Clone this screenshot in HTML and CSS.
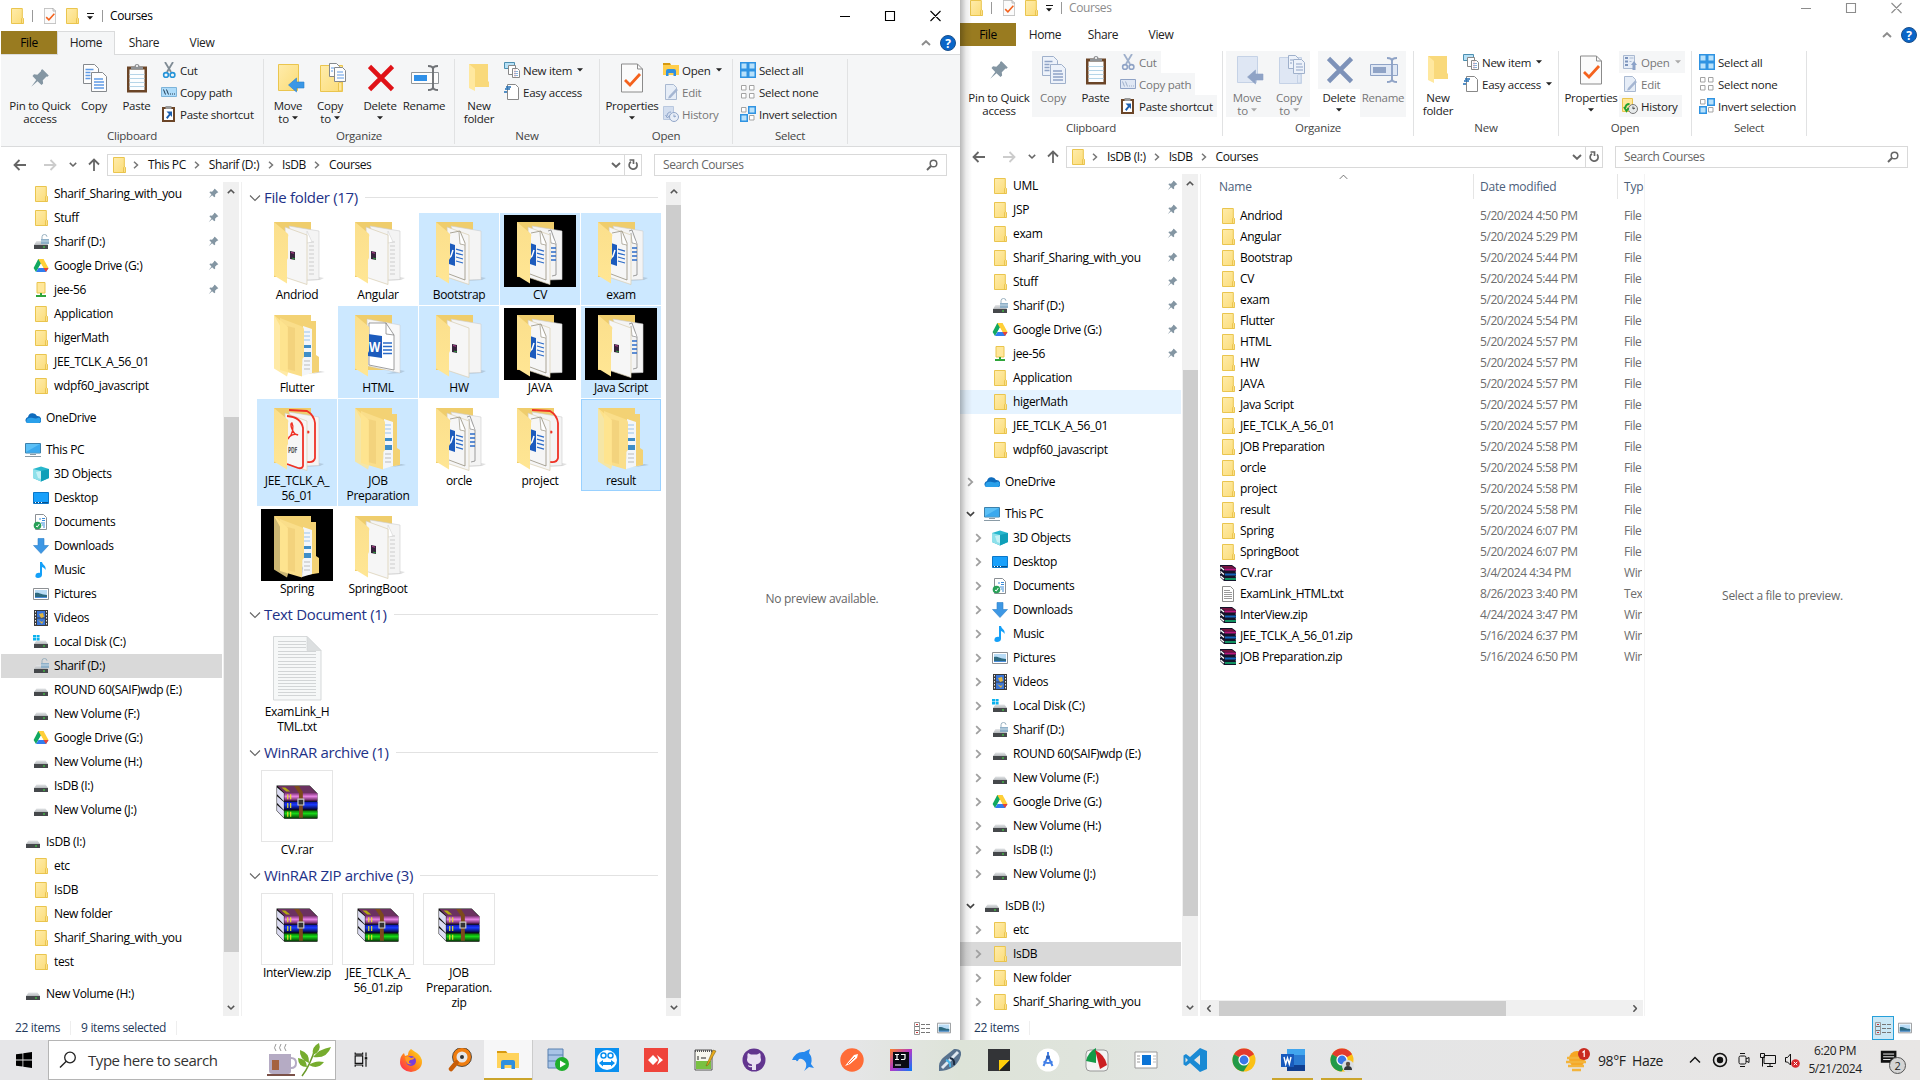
FILE: index.html
```html
<!DOCTYPE html>
<html lang="en">
<head>
<meta charset="utf-8">
<title>Courses</title>
<link rel="stylesheet" href="styles.css">
</head>
<body>
<svg class="defs" aria-hidden="true">
<defs>
<linearGradient id="gf" x1="0" y1="0" x2="1" y2="1"><stop offset="0" stop-color="#ffecab"/><stop offset="1" stop-color="#fbdc78"/></linearGradient>
<linearGradient id="gflap" x1="0" y1="0" x2="0" y2="1"><stop offset="0" stop-color="#fbdf8c"/><stop offset="1" stop-color="#ffe694"/></linearGradient>
<linearGradient id="gdrv" x1="0" y1="0" x2="0" y2="1"><stop offset="0" stop-color="#e4e6e8"/><stop offset="1" stop-color="#b4b8bb"/></linearGradient>
<linearGradient id="gpur" x1="0" y1="0" x2="0" y2="1"><stop offset="0" stop-color="#7a2c72"/><stop offset=".45" stop-color="#e884e4"/><stop offset="1" stop-color="#5c1d55"/></linearGradient>
<linearGradient id="gblu" x1="0" y1="0" x2="0" y2="1"><stop offset="0" stop-color="#1010a8"/><stop offset=".4" stop-color="#1a3cff"/><stop offset="1" stop-color="#04043c"/></linearGradient>
<linearGradient id="ggrn" x1="0" y1="0" x2="0" y2="1"><stop offset="0" stop-color="#067006"/><stop offset=".4" stop-color="#18d818"/><stop offset="1" stop-color="#053c05"/></linearGradient>
<linearGradient id="gff" x1="1" y1="0" x2="0" y2="1"><stop offset="0" stop-color="#ffe226"/><stop offset=".5" stop-color="#ff8a16"/><stop offset="1" stop-color="#ff1a5e"/></linearGradient>
<linearGradient id="gij" x1="0" y1="0" x2="1" y2="1"><stop offset="0" stop-color="#fd8224"/><stop offset=".5" stop-color="#b238c8"/><stop offset="1" stop-color="#087cfa"/></linearGradient>
</defs>
<symbol id="folder" viewBox="0 0 16 16"><path d="M2.500.5h10.800v9.200l1 .8v5H2.500z" fill="var(--f1,url(#gf))" stroke="var(--f2,#eac54e)"/><path d="M12.500 15.500V10.500l.8-.8 1 .8v5z" fill="var(--f1,#ffe79a)" stroke="var(--f2,#e6be40)" stroke-width=".8"/></symbol>
<symbol id="netfolder" viewBox="0 0 16 16"><path d="M4 .5h8v10.500H4z" fill="#ffe79a" stroke="#eac54e"/><path d="M3 14h10M8 11v4" stroke="#2fa53a" stroke-width="2"/></symbol>
<symbol id="drive" viewBox="0 0 16 16"><path d="M3.500 6.500h9L15 10H1z" fill="url(#gdrv)"/><path d="M1 10h14v4H1z" fill="#45484b"/><path d="M10 11.500h2v1h-2z" fill="#3fe83f"/></symbol>
<symbol id="drivelock" viewBox="0 0 16 16"><path d="M3.500 7h9L15 11H1z" fill="url(#gdrv)"/><path d="M1 11h14v4H1z" fill="#45484b"/><path d="M10 12.500h2v1h-2z" fill="#3fe83f"/><path d="M9 5V2.800a2.500 2.300 0 0 1 5 0" fill="none" stroke="#9ab1bf"/><path d="M8 5h8v5H8z" fill="#8fb0c8"/><path d="M8 7h8" stroke="#c7dbe8"/></symbol>
<symbol id="drivec" viewBox="0 0 16 16"><use href="#drive"/><path d="M0 1h3v2.500H0zM3.600 1h3v2.500h-3zM0 4.100h3v2.500H0zM3.600 4.100h3v2.500h-3z" fill="#0ab2ee"/></symbol>
<symbol id="gdrive" viewBox="0 0 16 16"><path d="M5.300 1h5.200L5.500 9.800 3 14 .6 10z" fill="#11a861"/><path d="M5.300 1h5.200l5 9h-5.300z" fill="#ffcf38"/><path d="M3 14l2.500-4h10L13 14z" fill="#2f7df0"/><path d="M10.500 10h5L13 14z" fill="#ea4335"/><path d="M8 5.800L10.500 10h-5z" fill="#fff"/></symbol>
<symbol id="onedrive" viewBox="0 0 16 16"><path d="M3 7a4.800 4.800 0 0 1 9-1 4 4 0 0 1 3 7H2A3.300 3.300 0 0 1 3 7z" fill="#0f6cbd"/><path d="M2 13a3 3 0 0 1 2-5c4-1 5 2 10-.5A3 3 0 0 1 14 13z" fill="#2aa0ea"/></symbol>
<symbol id="pc" viewBox="0 0 16 16"><path d="M.5 1.500h15v9.500H.5z" fill="#5cc0f6" stroke="#3c81ac"/><path d="M1 10L15 2v8.500H1z" fill="#3ba9ee"/><path d="M5 12.500h6M0 14.500h16" stroke="#8a9ba6"/></symbol>
<symbol id="cube" viewBox="0 0 16 16"><path d="M0 3l8-2.500L16 3v9l-8 3.500L0 12z" fill="#28b7cc"/><path d="M0 3l8 2v10.500L0 12z" fill="#8de0ea"/><path d="M3 6l5-1v8l-3-1z" fill="#c5f1f5"/><path d="M8 5l8-2v9l-8 3.500z" fill="#0f9fb8"/></symbol>
<symbol id="desktop" viewBox="0 0 16 16"><path d="M.5 2.500h15v11H.5z" fill="#18a0fb" stroke="#0a77c9"/><path d="M1 12.500h14" stroke="#07508c"/><path d="M2 12.500h9" stroke="#fff" stroke-dasharray="1 2"/></symbol>
<symbol id="docs" viewBox="0 0 16 16"><path d="M2.500.5h8l3 3v12h-11z" fill="#fff" stroke="#8a8f94"/><path d="M6 5h2M9 4.500h3M9 6.500h3M8 9h4M9 11h3M10 13h2" stroke="#3a8bd8"/><circle cx="4.500" cy="11.500" r="3.800" fill="#28a058"/><path d="M3 12l1.300 1 2-3" fill="none" stroke="#fff"/></symbol>
<symbol id="down" viewBox="0 0 16 16"><path d="M5 .5h6v7h4.500L8 15.500.5 7.500H5z" fill="#3d97e4" stroke="#2c7fca" stroke-width=".6"/></symbol>
<symbol id="music" viewBox="0 0 16 16"><path d="M7 0h2c.5 3 4.500 3.500 3.500 8-1-2-2-2.500-3.500-3v8c0 2-2 3-4 3s-3-1-2.500-2.800S5 10.500 7 11z" fill="#14a0f8"/></symbol>
<symbol id="pics" viewBox="0 0 16 16"><path d="M.5 2.500h15v11H.5z" fill="#fff" stroke="#8d9094"/><path d="M2 4h12v8H2z" fill="#b9dcf6"/><path d="M2 7c4-1 6 2 12 2v3H2z" fill="#2e6a80"/><path d="M2 11h12v1H2z" fill="#4c8edb"/></symbol>
<symbol id="video" viewBox="0 0 16 16"><path d="M1 0h14v16H1z" fill="#3a3a3a"/><path d="M2.500 1v14M13.500 1v14" stroke="#eee" stroke-dasharray="1.500 1.500"/><path d="M4 1h8v6.500H4zM4 8.500h8V15H4z" fill="#3a76d8"/><path d="M6 4l4-1 1 4-3 1zM5 10l4 2 2-2-2 4z" fill="#e3b53a"/></symbol>
<symbol id="pin" viewBox="0 0 16 16"><path d="M10 1l5 5-1 1-.8-.2-3 3 .3 2.500-1.300 1.200L6 10.500 1 15l4-5.500-3-3.200L3.200 5l2.700.3 3-3L8.800 1.500z" fill="#8496a3"/></symbol>
<symbol id="rar" viewBox="0 0 16 16"><path d="M0 0h12l4 3v3l-.5 1 .5 1v3l-.5 1 .5.500V16H4L0 12V9l1-.5L0 7.500V4.500L1 4 0 3z" fill="#14142a"/><path d="M1 1h11l3 2.300H4.500z" fill="#74133f"/><path d="M4.500 3.500H16v2H4.500z" fill="#b8187c"/><path d="M5 8.500h11v2H5z" fill="#1563b8"/><path d="M5 13h11v2H5z" fill="#109060"/><path d="M.5 2l3.500 3M.5 6.500l3.500 3M.5 11l3.500 3" stroke="#fff" stroke-width="1.300"/></symbol>
<symbol id="txt" viewBox="0 0 16 16"><path d="M2.500.5h8l3 3v12h-11z" fill="#fff" stroke="#8c8c8c"/><path d="M4 4.500h6M4 6.500h8M4 8.500h8M4 10.500h8M4 12.500h8" stroke="#999"/></symbol>
<symbol id="check" viewBox="0 0 22 29"><path d="M.5.5h16l5 5v23H.5z" fill="#fbfbfb" stroke="#8b8b8b"/><path d="M16.500.5v5h5" fill="none" stroke="#8b8b8b"/><path d="M4 16.500l5 5 10-11" fill="none" stroke="#f4621d" stroke-width="2.800"/></symbol>
<symbol id="copy" viewBox="0 0 24 28"><g fill="var(--p,#fdfdfd)" stroke="var(--ps,#85898d)"><path d="M.5.5h11l4 4v15H.5z"/><path d="M8.500 8.500h11l4 4v15h-15z"/></g><path d="M2.500 5.500h8M2.500 8.500h5M2.500 11.500h5M2.500 14.500h5M11 15h9M11 18h10M11 21h10M11 24h10" stroke="var(--b,#5f9be6)" stroke-width="1.300"/></symbol>
<symbol id="paste" viewBox="0 0 20 29"><path d="M0 3h20v26H0z" fill="#6b4527"/><path d="M2.500 6h15v20.500h-15z" fill="#fcfeff"/><path d="M2.500 11h15M2.500 15h15M2.500 19h15M2.500 23h15" stroke="#b5d5e8"/><path d="M4 6V3h3.500a2.500 2.500 0 0 1 5 0H16v3z" fill="#8e9194"/><circle cx="10" cy="2.500" r="1" fill="#fff"/></symbol>
<symbol id="cut" viewBox="0 0 16 16"><path d="M4 0l6 10M12 0L6 10" stroke="var(--ps,#7f8b94)" stroke-width="1.800"/><circle cx="5" cy="13" r="2.400" fill="none" stroke="var(--b,#2493d8)" stroke-width="1.600"/><circle cx="11.500" cy="13" r="2.400" fill="none" stroke="var(--b,#2493d8)" stroke-width="1.600"/></symbol>
<symbol id="path" viewBox="0 0 16 16"><path d="M.5 3.500h15v9H.5z" fill="var(--f1,#aedcfa)" stroke="var(--b,#7db4da)"/><path d="M2.500 5.500l2 5M5.500 5.500l2 5M9 10h1M11 10h1M13 10h1" stroke="var(--ps,#1f3a52)"/></symbol>
<symbol id="shortcut" viewBox="0 0 16 16"><path d="M1 1h13v15H1z" fill="#6b4527"/><path d="M3 3h9v11H3z" fill="#fff"/><path d="M4.500 0h6v3h-6z" fill="#999"/><path d="M5.500 5.500H11V11L9.300 9.300 6.500 13 5 11.500 8 8z" fill="#1c5fae"/></symbol>
<symbol id="bigfolder" viewBox="0 0 26 30"><path d="M.5 1.500h20v22l-1 1v3H.5z" fill="var(--f1,url(#gf))" stroke="var(--f2,#eac54e)"/></symbol>
<symbol id="move" viewBox="0 0 27 30"><use href="#bigfolder" width="26" height="30"/><path d="M10.500 22l8-7v4H26v6h-7.500v4z" fill="var(--b,#3a97e6)" stroke="var(--b,#2a7fcc)" stroke-width=".6"/></symbol>
<symbol id="copyto" viewBox="0 0 27 30"><path d="M.5 2.500h22v26H.5z" fill="var(--f1,url(#gf))" stroke="var(--f2,#eac54e)"/><path d="M18.500 28V20l1.500-1 2 1v8z" fill="var(--f1,#ffe79a)" stroke="var(--f2,#eac54e)"/><g fill="var(--p,#fdfdfd)" stroke="var(--ps,#85898d)"><path d="M9.500.5h7l3 3v10h-10z"/><path d="M14.500 4.500h8l3 3v11h-11z"/></g><path d="M11 5h3M11 8h2M17 9h6M17 12h7M17 15h7" stroke="var(--b,#5f9be6)"/></symbol>
<symbol id="delete" viewBox="0 0 26 26"><path d="M1.500 1.500l23 23M24.500 1.500l-23 23" stroke="var(--b,#e01217)" stroke-width="4.600"/></symbol>
<symbol id="rename" viewBox="0 0 28 26"><path d="M.5 7.500h27v11H.5z" fill="var(--f1,#fdfdfd)" stroke="var(--b,#92979b)"/><path d="M3 10h13v6H3z" fill="var(--b,#2f90e8)"/><path d="M22 2v22M17 1c4 0 5 1 5 3 0-2 1-3 5-3M17 25c4 0 5-1 5-3 0 2 1 3 5 3" fill="none" stroke="var(--b,#6f7276)" stroke-width="1.900"/></symbol>
<symbol id="newfolder" viewBox="0 0 20 28"><path d="M0 0h19v17l1 1v5H4z" fill="#f9d97b"/><path d="M0 0l6 5v22l-6-3z" fill="#ffe89f"/></symbol>
<symbol id="newitem" viewBox="0 0 16 16"><path d="M.5.5h10v6H.5z" fill="#b7e1f7" stroke="#4d8fb0"/><path d="M4.500 3.500h7v9h-7z" fill="#fff" stroke="#888"/><path d="M8.500 6.500h5l2 2v7h-7z" fill="#fff" stroke="#888"/><path d="M10 9.500h4M10 11.500h4M10 13.500h4" stroke="#88b2dc"/><path d="M11 7v8" stroke="#e8a0a0" stroke-width=".6"/></symbol>
<symbol id="easy" viewBox="0 0 16 16"><path d="M3.500.5h8l3 3v12h-11z" fill="#fff" stroke="#888"/><path d="M0 8h3M1 5h5M2 3h5" stroke="#1f6eb5" stroke-width="1.500"/></symbol>
<symbol id="openx" viewBox="0 0 16 16"><path d="M0 1h7l1 2H0z" fill="#d79a10"/><path d="M0 3h16v10H0z" fill="#ffce4c"/><path d="M3 14V9q0-2 2-2h6q2 0 2 2v5h-2.500v-3h-5v3z" fill="#2f8fe0"/></symbol>
<symbol id="openoff" viewBox="0 0 16 16"><path d="M1.500 1.500h11v13h-11z" fill="#e6edf7" stroke="#a9b9d1"/><path d="M3 4h3M3 7.500h3M3 11h3" stroke="#7b93bb" stroke-width="2"/><path d="M7.500 4h4M7.500 7.500h2" stroke="#a9b9d1"/><path d="M9 11l3-4 3 4h-1.500v5h-3v-5z" fill="#8ba2c8"/></symbol>
<symbol id="edit" viewBox="0 0 16 16"><path d="M2.500.5h8l3 3v12h-11z" fill="#e6edf7" stroke="#a9b9d1"/><path d="M5 14.500L6 12 13 4.500l2 1.500-7.500 8z" fill="#a5b6d2"/></symbol>
<symbol id="historyoff" viewBox="0 0 16 16"><path d="M.5.5h10v13H.5z" fill="#d3deef" stroke="#b9c8df"/><circle cx="11" cy="11" r="4.500" fill="#e8eef7" stroke="#92a6c8"/><path d="M11 8.500V11l2-1M4 10c0-3 2-4 4-4M2.500 9l2 3 2-2.500" fill="none" stroke="#8ba2c8"/></symbol>
<symbol id="history" viewBox="0 0 16 16"><path d="M.5.5h10v13H.5z" fill="#ffe79a" stroke="#eac54e"/><circle cx="11" cy="11" r="4.500" fill="#e6e9ea" stroke="#777"/><path d="M11 8.500V11l2-1" fill="none" stroke="#444"/><path d="M3.500 10c0-3 2-4 4-4M2 9l2.500 4 2-3" fill="none" stroke="#20a030" stroke-width="1.800"/></symbol>
<symbol id="selall" viewBox="0 0 16 16"><path d="M.75.75h6.500v6.500H.75zM8.750.75h6.500v6.500h-6.500zM.75 8.750h6.500v6.500H.75zM8.750 8.750h6.500v6.500h-6.500z" fill="#b8e1fb" stroke="#2f93e2" stroke-width="1.500"/></symbol>
<symbol id="selnone" viewBox="0 0 16 16"><path d="M1.500 1.500h4.500v4.500H1.500zM9.500 1.500H14v4.500H9.500zM1.500 9.500h4.500V14H1.500zM9.500 9.500H14V14H9.500z" fill="#fff" stroke="#a3a3a3"/></symbol>
<symbol id="selinv" viewBox="0 0 16 16"><path d="M1.500 1.500h4.500v4.500H1.500zM9.500 9.500H14V14H9.500z" fill="#fff" stroke="#a3a3a3"/><path d="M8.750.75h6.500v6.500h-6.500zM.75 8.750h6.500v6.500H.75z" fill="#b8e1fb" stroke="#2f93e2" stroke-width="1.500"/></symbol>
<symbol id="tri" viewBox="0 0 6 4"><path d="M0 .3h6L3 3.500z" fill="currentColor"/></symbol>
<symbol id="right" viewBox="0 0 6 8"><path d="M1 .7L4.500 4 1 7.300" fill="none" stroke="currentColor" stroke-width="1.500"/></symbol>
<symbol id="dn" viewBox="0 0 10 6"><path d="M1 1l4 3.800L9 1" fill="none" stroke="currentColor" stroke-width="1.900"/></symbol>
<symbol id="up" viewBox="0 0 10 6"><path d="M1 5l4-3.800L9 5" fill="none" stroke="currentColor" stroke-width="1.900"/></symbol>
<symbol id="thin" viewBox="0 0 12 8"><path d="M1 1.500l5 5 5-5" fill="none" stroke="currentColor" stroke-width="1.100"/></symbol>
<symbol id="arrow" viewBox="0 0 14 12"><path d="M6.500 1L1.500 6l5 5M1.500 6H13" fill="none" stroke="currentColor" stroke-width="1.800"/></symbol>
<symbol id="refresh" viewBox="0 0 12 12"><path d="M4 2.800a4 4 0 1 0 5 .6M2.500 1h4v4" fill="none" stroke="currentColor" stroke-width="1.700"/></symbol>
<symbol id="lens" viewBox="0 0 12 12"><circle cx="7.500" cy="4.500" r="3.300" fill="none" stroke="currentColor" stroke-width="1.500"/><path d="M5 7L1 11" stroke="currentColor" stroke-width="1.900"/></symbol>
<symbol id="details" viewBox="0 0 17 13"><path d="M.5.5h5v12h-5z" fill="none" stroke="#999"/><path d="M1 4.500h4M1 8.500h4M7 2.500h4M12 2.500h4M7 6.500h4M12 6.500h4M7 10.500h4M12 10.500h4" stroke="#777"/><path d="M2 2h2v1H2zM2 10h2v1H2z" fill="#c33"/></symbol>
<symbol id="winlogo" viewBox="0 0 16 16"><path d="M0 2.300L6.500 1.400V7.600H0zM7.300 1.300L16 0v7.600H7.300zM0 8.400h6.500v6.200L0 13.700zM7.300 8.400H16V16l-8.700-1.300z" fill="#000"/></symbol>

<symbol id="t-back" viewBox="0 0 72 72"><path d="M44 66l15-1 4-2-5-1z" fill="#000" opacity=".12"/><path d="M13 7h37v55H13z" fill="#efcd6c"/></symbol>
<symbol id="t-flap" viewBox="0 0 72 72"><path d="M13 7l13 11q2 1 1 4v21l-1 2v23.500l-13-8z" fill="url(#gflap)"/></symbol>
<symbol id="t-p2" viewBox="0 0 72 72"><path d="M28 11l30 5v48.500l-15 .5z" fill="#f4f4f4" stroke="#ccc" stroke-width=".6"/></symbol>
<symbol id="t-p1" viewBox="0 0 72 72"><path d="M24 12l22 8v49.500l-21-7z" fill="#f6f6f6" stroke="#d8cdb0" stroke-width=".7"/></symbol>
<symbol id="t-rar" viewBox="0 0 72 72"><path d="M29 36l5 1v8l-5-1z" fill="#36233c"/><path d="M30 37.500l3 .7" stroke="#b33a8c"/><path d="M31 43l3 1" stroke="#2a9a3a"/></symbol>
<symbol id="t-lines" viewBox="0 0 72 72"><path d="M48 27h5M48 31h5M48 35h5M48 39h5M48 43h5M48 47h5M48 51h5M48 55h5M48 59h5" stroke="#ccc"/><path d="M46 16l5 11-5 1z" fill="#fff" stroke="#ccc" stroke-width=".5"/></symbol>
<symbol id="t-word1" viewBox="0 0 72 72"><path d="M27 18l10-2 5 12v37l-16-6" fill="none" stroke="#8a836f" stroke-width=".7"/><path d="M36 17l1 12 5 1" fill="#fff" stroke="#8a836f" stroke-width=".6"/><path d="M26 28l6 2v21l-6-2z" fill="#1c5bbd"/><path d="M26 43l2-2 2-6" fill="none" stroke="#fff" stroke-width="1.500"/><path d="M33 34l7 2M33 38l7 2M33 42l7 2M33 46l7 2" stroke="#2b6bc8" stroke-width="1.300"/></symbol>
<symbol id="t-word2" viewBox="0 0 72 72"><path d="M44 16l3-1 5 14v31l-4 1" fill="none" stroke="#777" stroke-width=".7"/><path d="M46 18l1 10 5 1" fill="#fff" stroke="#777" stroke-width=".6"/><path d="M47 33h5M47 37h5M47 41h5M47 45h5" stroke="#2b6bc8" stroke-width="1.300"/></symbol>
<symbol id="t-pdf2" viewBox="0 0 72 72"><path d="M28 9l18 1q7 4 8 12v35q-1 5-8 4" fill="none" stroke="#ef3226" stroke-width="1.800"/><circle cx="47" cy="31" r="1.500" fill="#ef3226"/></symbol>
<symbol id="t-pdf1" viewBox="0 0 72 72"><path d="M26 15q14 1 16 12v38q-1 3-5 2l-11-4" fill="none" stroke="#ef3226" stroke-width="1.800"/><path d="M27 38c5-5 6-12 4-16-3 0 1 12 6 12-4-2-9 1-10 4z" fill="none" stroke="#ef3226" stroke-width="1.400"/></symbol>
<symbol id="t-wide" viewBox="0 0 72 72"><path d="M25 11l33 6v48l-32-7z" fill="#f8f8f8" stroke="#c8c8c8" stroke-width=".5"/><path d="M27 15h17l8 12v35L27 57z" fill="#fff" stroke="#777" stroke-width=".7"/><path d="M44 15v11l8 1" fill="none" stroke="#777" stroke-width=".7"/><path d="M26 26l14 2v22l-14-2z" fill="#1c5bbd"/><path d="M41 35h9M41 38.500h9M41 42h9M41 45.500h9" stroke="#2b6bc8" stroke-width="1.300"/></symbol>
<symbol id="t-yellow" viewBox="0 0 72 72"><path d="M50 66l14-2-5-1z" fill="#000" opacity=".15"/><path d="M13 7h37v6h5v34l3 2v15l-12 2z" fill="#f3d274"/><path d="M42 18l9 3v44l-10 3z" fill="#f3f6fa"/><path d="M43 24h6M43 28h6M43 32h6" stroke="#9bc3e8"/><path d="M43 37h7v3h-7zM43 44h7v5h-7z" fill="#3f8ec8"/><path d="M43 53h6M43 57h6M43 61h6" stroke="#bbb"/><path d="M19 10l21 8q3 1 3 4v27l-2 2v17.500L19 62z" fill="#fade8a"/><path d="M26 18l8 2v43l-8-2z" fill="#efcf77" opacity=".7"/><path d="M13 7l14 12v46l-1 3.500-13-8z" fill="#ffe590" opacity=".8"/></symbol>
<symbol id="t-txt" viewBox="0 0 72 72"><path d="M12.500 4.500H46l14 14V68H12.500z" fill="#f6f8f8" stroke="#d6d9da"/><path d="M46 4.500v14h14z" fill="#dcdfe0" stroke="#d0d3d4" stroke-width=".6"/><path d="M17 9.500h28M17 12.500h28M17 15.500h28M17 19.500h38M17 22.500h38M17 25.500h38M17 29.500h38M17 32.500h38M17 35.500h38M17 39.500h38M17 42.500h38M17 45.500h38M17 48.500h38M17 51.500h38M17 54.500h38M17 57.500h38M17 60.500h38M17 63.500h38" stroke="#d2d5d6"/></symbol>
<symbol id="t-book" viewBox="0 0 72 72"><path d="M15 15h34l8 8v26H23l-8-8z" fill="#111"/><path d="M15.500 17l7 6v8l-7-7zM15.500 26l7 6v8l-7-7zM15.500 35l7 6v7l-7-7z" fill="#dcdcf2"/><path d="M16 15.500h33l7 7H23z" fill="#6b3160"/><path d="M23 22.500h34v8H23z" fill="url(#gpur)"/><path d="M23 31.500h34v8H23z" fill="url(#gblu)"/><path d="M23 40.500h34v8H23z" fill="url(#ggrn)"/><path d="M20 17l4 0 5 4h-4z" fill="#b3ab12"/><path d="M26.500 24v5M29.500 24v5M26.500 33v5M29.500 33v5M26.500 42v5M29.500 42v5" stroke="#e8e22a" stroke-width="1.200"/><path d="M33 15.500h5l4 6V48h-4V23z" fill="#7c4a1c"/><path d="M37 29h6v6h-6z" fill="#333" stroke="#ccc" stroke-width="1.200"/></symbol>
</svg>

<div class="screen">
<main class="desk">

<section class="win win1">
<header class="title"><svg class="i"><use href="#folder"/></svg><i class="bar b1"></i><svg class="chk"><use href="#check"/></svg><svg class="i q"><use href="#folder"/></svg><span class="qat"><i></i><svg class="tri"><use href="#tri"/></svg></span><i class="bar"></i><span class="cap">Courses</span><svg class="wb" viewBox="0 0 102 12"><path d="M0 6.500h10M45.500 1.500h9v9h-9zM90.500 1l10 10M100.500 1l-10 10" fill="none" stroke="currentColor" stroke-width="1.100"/></svg></header>
<nav class="tabs"><span class="file">File</span><span class="home">Home</span><span>Share</span><span>View</span><svg class="col"><use href="#up"/></svg><span class="help">?</span></nav>
<div class="ribbon">
 <div class="grp g1"><div class="btns"><div class="big b66"><svg class="pinb"><use href="#pin"/></svg>Pin to Quick<br>access</div><div class="big b42"><svg class="n1" width="24" height="28"><use href="#copy"/></svg>Copy</div><div class="big b42"><svg width="20" height="29"><use href="#paste"/></svg>Paste</div><div class="small"><span><svg class="i"><use href="#cut"/></svg>Cut</span><span><svg class="i"><use href="#path"/></svg>Copy path</span><span><svg class="i"><use href="#shortcut"/></svg>Paste shortcut</span></div></div><b>Clipboard</b></div>
 <div class="grp g2"><div class="btns"><div class="big b42"><svg class="n3" width="27" height="30"><use href="#move"/></svg>Move<br>to <svg class="tri"><use href="#tri"/></svg></div><div class="big b42"><svg class="n3" width="27" height="30"><use href="#copyto"/></svg>Copy<br>to <svg class="tri"><use href="#tri"/></svg></div><div class="big b42 del"><svg class="n1" width="26" height="26"><use href="#delete"/></svg>Delete<br><svg class="tri"><use href="#tri"/></svg></div><div class="big b46"><svg class="n1" width="28" height="26"><use href="#rename"/></svg>Rename</div></div><b>Organize</b></div>
 <div class="grp g3"><div class="btns"><div class="big b42"><svg width="20" height="28"><use href="#newfolder"/></svg>New<br>folder</div><div class="small"><span><svg class="i"><use href="#newitem"/></svg>New item <svg class="tri"><use href="#tri"/></svg></span><span><svg class="i"><use href="#easy"/></svg>Easy access</span></div></div><b>New</b></div>
 <div class="grp g4"><div class="btns"><div class="big b54"><svg width="22" height="29"><use href="#check"/></svg>Properties<br><svg class="tri"><use href="#tri"/></svg></div><div class="small"><span><svg class="i"><use href="#openx"/></svg>Open <svg class="tri"><use href="#tri"/></svg></span><span class="off"><svg class="i"><use href="#edit"/></svg>Edit</span><span class="off"><svg class="i"><use href="#historyoff"/></svg>History</span></div></div><b>Open</b></div>
 <div class="grp g5"><div class="btns"><div class="small"><span><svg class="i"><use href="#selall"/></svg>Select all</span><span><svg class="i"><use href="#selnone"/></svg>Select none</span><span><svg class="i"><use href="#selinv"/></svg>Invert selection</span></div></div><b>Select</b></div>
</div>
<div class="addr"><svg class="ar"><use href="#arrow"/></svg><svg class="ar fw"><use href="#arrow"/></svg><svg class="rec"><use href="#dn"/></svg><svg class="ar upw"><use href="#arrow"/></svg>
 <div class="crumbs"><svg class="i"><use href="#folder"/></svg><svg class="ch"><use href="#right"/></svg>This PC<svg class="ch"><use href="#right"/></svg>Sharif (D:)<svg class="ch"><use href="#right"/></svg>IsDB<svg class="ch"><use href="#right"/></svg>Courses<svg class="dd"><use href="#dn"/></svg><span class="rf"><svg><use href="#refresh"/></svg></span></div>
 <div class="search">Search Courses<svg><use href="#lens"/></svg></div></div>
<div class="body">
<ul class="tree">
<li><svg class="i"><use href="#folder"/></svg>Sharif_Sharing_with_you<svg class="p"><use href="#pin"/></svg></li>
<li><svg class="i"><use href="#folder"/></svg>Stuff<svg class="p"><use href="#pin"/></svg></li>
<li><svg class="i"><use href="#drivelock"/></svg>Sharif (D:)<svg class="p"><use href="#pin"/></svg></li>
<li><svg class="i"><use href="#gdrive"/></svg>Google Drive (G:)<svg class="p"><use href="#pin"/></svg></li>
<li><svg class="i"><use href="#netfolder"/></svg>jee-56<svg class="p"><use href="#pin"/></svg></li>
<li><svg class="i"><use href="#folder"/></svg>Application</li>
<li><svg class="i"><use href="#folder"/></svg>higerMath</li>
<li><svg class="i"><use href="#folder"/></svg>JEE_TCLK_A_56_01</li>
<li><svg class="i"><use href="#folder"/></svg>wdpf60_javascript</li>
<li class="top"><svg class="i"><use href="#onedrive"/></svg>OneDrive</li>
<li class="top"><svg class="i"><use href="#pc"/></svg>This PC</li>
<li><svg class="i"><use href="#cube"/></svg>3D Objects</li>
<li><svg class="i"><use href="#desktop"/></svg>Desktop</li>
<li><svg class="i"><use href="#docs"/></svg>Documents</li>
<li><svg class="i"><use href="#down"/></svg>Downloads</li>
<li><svg class="i"><use href="#music"/></svg>Music</li>
<li><svg class="i"><use href="#pics"/></svg>Pictures</li>
<li><svg class="i"><use href="#video"/></svg>Videos</li>
<li><svg class="i"><use href="#drivec"/></svg>Local Disk (C:)</li>
<li class="cur"><svg class="i"><use href="#drivelock"/></svg>Sharif (D:)</li>
<li><svg class="i"><use href="#drive"/></svg>ROUND 60(SAIF)wdp (E:)</li>
<li><svg class="i"><use href="#drive"/></svg>New Volume (F:)</li>
<li><svg class="i"><use href="#gdrive"/></svg>Google Drive (G:)</li>
<li><svg class="i"><use href="#drive"/></svg>New Volume (H:)</li>
<li><svg class="i"><use href="#drive"/></svg>IsDB (I:)</li>
<li><svg class="i"><use href="#drive"/></svg>New Volume (J:)</li>
<li class="top"><svg class="i"><use href="#drive"/></svg>IsDB (I:)</li>
<li><svg class="i"><use href="#folder"/></svg>etc</li>
<li><svg class="i"><use href="#folder"/></svg>IsDB</li>
<li><svg class="i"><use href="#folder"/></svg>New folder</li>
<li><svg class="i"><use href="#folder"/></svg>Sharif_Sharing_with_you</li>
<li><svg class="i"><use href="#folder"/></svg>test</li>
<li class="top"><svg class="i"><use href="#drive"/></svg>New Volume (H:)</li>
</ul>
<div class="sb sb1"><svg><use href="#up"/></svg><i></i><svg><use href="#dn"/></svg></div>
<div class="files">
<h2><svg><use href="#thin"/></svg>File folder (17)</h2>
<div class="tiles">
<div class="t"><svg><use href="#t-back"/><use href="#t-p2"/><use href="#t-lines"/><use href="#t-p1"/><use href="#t-rar"/><use href="#t-flap"/></svg>Andriod</div>
<div class="t"><svg><use href="#t-back"/><use href="#t-p2"/><use href="#t-lines"/><use href="#t-p1"/><use href="#t-rar"/><use href="#t-flap"/></svg>Angular</div>
<div class="t s"><svg><use href="#t-back"/><use href="#t-p2"/><use href="#t-p1"/><use href="#t-word1"/><use href="#t-flap"/></svg>Bootstrap</div>
<div class="t s k"><svg><use href="#t-back"/><use href="#t-p2"/><use href="#t-word2"/><use href="#t-p1"/><use href="#t-word1"/><use href="#t-flap"/></svg>CV</div>
<div class="t s"><svg><use href="#t-back"/><use href="#t-p2"/><use href="#t-word2"/><use href="#t-p1"/><use href="#t-word1"/><use href="#t-flap"/></svg>exam</div>
<div class="t"><svg><use href="#t-yellow"/></svg>Flutter</div>
<div class="t s"><svg><use href="#t-back"/><use href="#t-wide"/><text x="27" y="44" font-size="14" font-weight="700" fill="#fff" textLength="11" lengthAdjust="spacingAndGlyphs">W</text><use href="#t-flap"/></svg>HTML</div>
<div class="t s"><svg><use href="#t-back"/><use href="#t-p2"/><use href="#t-p1"/><use href="#t-rar"/><use href="#t-flap"/></svg>HW</div>
<div class="t k"><svg><use href="#t-back"/><use href="#t-p2"/><use href="#t-p1"/><use href="#t-word1"/><use href="#t-flap"/></svg>JAVA</div>
<div class="t s k"><svg><use href="#t-back"/><use href="#t-p2"/><use href="#t-word2"/><use href="#t-p1"/><use href="#t-rar"/><use href="#t-flap"/></svg>Java Script</div>
<div class="t s"><svg><use href="#t-back"/><use href="#t-p2"/><use href="#t-pdf2"/><use href="#t-p1"/><use href="#t-pdf1"/><text x="27" y="52" font-size="8" font-weight="700" fill="#555" textLength="9" lengthAdjust="spacingAndGlyphs">PDF</text><use href="#t-flap"/></svg>JEE_TCLK_A_<br>56_01</div>
<div class="t s"><svg><use href="#t-yellow"/></svg>JOB<br>Preparation</div>
<div class="t"><svg><use href="#t-back"/><use href="#t-p2"/><use href="#t-word2"/><use href="#t-p1"/><use href="#t-word1"/><use href="#t-flap"/></svg>orcle</div>
<div class="t"><svg><use href="#t-back"/><use href="#t-p2"/><use href="#t-pdf2"/><use href="#t-p1"/><use href="#t-word1"/><use href="#t-flap"/></svg>project</div>
<div class="t s foc"><svg><use href="#t-yellow"/></svg>result</div>
<div class="t k"><svg><use href="#t-yellow"/></svg>Spring</div>
<div class="t"><svg><use href="#t-back"/><use href="#t-p2"/><use href="#t-lines"/><use href="#t-p1"/><use href="#t-rar"/><use href="#t-flap"/></svg>SpringBoot</div>
</div>
<h2><svg><use href="#thin"/></svg>Text Document (1)</h2>
<div class="tiles"><div class="t"><svg><use href="#t-txt"/></svg>ExamLink_H<br>TML.txt</div></div>
<h2><svg><use href="#thin"/></svg>WinRAR archive (1)</h2>
<div class="tiles"><div class="t fr"><svg><use href="#t-book"/></svg>CV.rar</div></div>
<h2><svg><use href="#thin"/></svg>WinRAR ZIP archive (3)</h2>
<div class="tiles"><div class="t fr"><svg><use href="#t-book"/></svg>InterView.zip</div><div class="t fr"><svg><use href="#t-book"/></svg>JEE_TCLK_A_<br>56_01.zip</div><div class="t fr"><svg><use href="#t-book"/></svg>JOB<br>Preparation.<br>zip</div></div>
</div>
<div class="sb sb2"><svg><use href="#up"/></svg><i></i><svg><use href="#dn"/></svg></div>
<div class="preview">No preview available.</div>
</div>
<footer class="status"><span>22 items</span><span>9 items selected</span><em class="v"><svg width="17" height="13"><use href="#details"/></svg></em><em class="v on"><svg class="i14"><use href="#pics"/></svg></em></footer>
</section>

<section class="win win2">
<header class="title"><svg class="i"><use href="#folder"/></svg><i class="bar b1"></i><svg class="chk"><use href="#check"/></svg><svg class="i q"><use href="#folder"/></svg><span class="qat"><i></i><svg class="tri"><use href="#tri"/></svg></span><i class="bar"></i><span class="cap">Courses</span><svg class="wb" viewBox="0 0 102 12"><path d="M0 6.500h10M45.500 1.500h9v9h-9zM90.500 1l10 10M100.500 1l-10 10" fill="none" stroke="currentColor" stroke-width="1.100"/></svg></header>
<nav class="tabs"><span class="file">File</span><span class="home">Home</span><span>Share</span><span>View</span><svg class="col"><use href="#up"/></svg><span class="help">?</span></nav>
<div class="ribbon">
 <div class="grp g1"><div class="btns"><div class="big b66"><svg class="pinb"><use href="#pin"/></svg>Pin to Quick<br>access</div><div class="big b42 sh off"><svg class="n1" width="24" height="28"><use href="#copy"/></svg>Copy</div><div class="big b42 sh"><svg width="20" height="29"><use href="#paste"/></svg>Paste</div><div class="small"><span class="sh off"><svg class="i"><use href="#cut"/></svg>Cut</span><span class="sh off"><svg class="i"><use href="#path"/></svg>Copy path</span><span class="sh"><svg class="i"><use href="#shortcut"/></svg>Paste shortcut</span></div></div><b>Clipboard</b></div>
 <div class="grp g2"><div class="btns"><div class="big b42 sh off"><svg class="n3" width="27" height="30"><use href="#move"/></svg>Move<br>to <svg class="tri"><use href="#tri"/></svg></div><div class="big b42 sh off"><svg class="n3" width="27" height="30"><use href="#copyto"/></svg>Copy<br>to <svg class="tri"><use href="#tri"/></svg></div><div class="big b42 del half"><svg class="n1" width="26" height="26"><use href="#delete"/></svg>Delete<br><svg class="tri"><use href="#tri"/></svg></div><div class="big b46 sh off"><svg class="n1" width="28" height="26"><use href="#rename"/></svg>Rename</div></div><b>Organize</b></div>
 <div class="grp g3"><div class="btns"><div class="big b42"><svg width="20" height="28"><use href="#newfolder"/></svg>New<br>folder</div><div class="small"><span><svg class="i"><use href="#newitem"/></svg>New item <svg class="tri"><use href="#tri"/></svg></span><span><svg class="i"><use href="#easy"/></svg>Easy access <svg class="tri"><use href="#tri"/></svg></span></div></div><b>New</b></div>
 <div class="grp g4"><div class="btns"><div class="big b54"><svg width="22" height="29"><use href="#check"/></svg>Properties<br><svg class="tri"><use href="#tri"/></svg></div><div class="small"><span class="sh off"><svg class="i"><use href="#openoff"/></svg>Open <svg class="tri"><use href="#tri"/></svg></span><span class="off"><svg class="i"><use href="#edit"/></svg>Edit</span><span class="sh"><svg class="i"><use href="#history"/></svg>History</span></div></div><b>Open</b></div>
 <div class="grp g5"><div class="btns"><div class="small"><span><svg class="i"><use href="#selall"/></svg>Select all</span><span><svg class="i"><use href="#selnone"/></svg>Select none</span><span><svg class="i"><use href="#selinv"/></svg>Invert selection</span></div></div><b>Select</b></div>
</div>
<div class="addr"><svg class="ar"><use href="#arrow"/></svg><svg class="ar fw"><use href="#arrow"/></svg><svg class="rec"><use href="#dn"/></svg><svg class="ar upw"><use href="#arrow"/></svg>
 <div class="crumbs"><svg class="i"><use href="#folder"/></svg><svg class="ch"><use href="#right"/></svg>IsDB (I:)<svg class="ch"><use href="#right"/></svg>IsDB<svg class="ch"><use href="#right"/></svg>Courses<svg class="dd"><use href="#dn"/></svg><span class="rf"><svg><use href="#refresh"/></svg></span></div>
 <div class="search">Search Courses<svg><use href="#lens"/></svg></div></div>
<div class="body">
<ul class="tree">
<li><svg class="i"><use href="#folder"/></svg>UML<svg class="p"><use href="#pin"/></svg></li>
<li><svg class="i"><use href="#folder"/></svg>JSP<svg class="p"><use href="#pin"/></svg></li>
<li><svg class="i"><use href="#folder"/></svg>exam<svg class="p"><use href="#pin"/></svg></li>
<li><svg class="i"><use href="#folder"/></svg>Sharif_Sharing_with_you<svg class="p"><use href="#pin"/></svg></li>
<li><svg class="i"><use href="#folder"/></svg>Stuff<svg class="p"><use href="#pin"/></svg></li>
<li><svg class="i"><use href="#drivelock"/></svg>Sharif (D:)<svg class="p"><use href="#pin"/></svg></li>
<li><svg class="i"><use href="#gdrive"/></svg>Google Drive (G:)<svg class="p"><use href="#pin"/></svg></li>
<li><svg class="i"><use href="#netfolder"/></svg>jee-56<svg class="p"><use href="#pin"/></svg></li>
<li><svg class="i"><use href="#folder"/></svg>Application</li>
<li class="hov"><svg class="i"><use href="#folder"/></svg>higerMath</li>
<li><svg class="i"><use href="#folder"/></svg>JEE_TCLK_A_56_01</li>
<li><svg class="i"><use href="#folder"/></svg>wdpf60_javascript</li>
<li class="top x"><svg class="e"><use href="#right"/></svg><svg class="i"><use href="#onedrive"/></svg>OneDrive</li>
<li class="top x"><svg class="ed"><use href="#dn"/></svg><svg class="i"><use href="#pc"/></svg>This PC</li>
<li class="x"><svg class="e"><use href="#right"/></svg><svg class="i"><use href="#cube"/></svg>3D Objects</li>
<li class="x"><svg class="e"><use href="#right"/></svg><svg class="i"><use href="#desktop"/></svg>Desktop</li>
<li class="x"><svg class="e"><use href="#right"/></svg><svg class="i"><use href="#docs"/></svg>Documents</li>
<li class="x"><svg class="e"><use href="#right"/></svg><svg class="i"><use href="#down"/></svg>Downloads</li>
<li class="x"><svg class="e"><use href="#right"/></svg><svg class="i"><use href="#music"/></svg>Music</li>
<li class="x"><svg class="e"><use href="#right"/></svg><svg class="i"><use href="#pics"/></svg>Pictures</li>
<li class="x"><svg class="e"><use href="#right"/></svg><svg class="i"><use href="#video"/></svg>Videos</li>
<li class="x"><svg class="e"><use href="#right"/></svg><svg class="i"><use href="#drivec"/></svg>Local Disk (C:)</li>
<li class="x"><svg class="e"><use href="#right"/></svg><svg class="i"><use href="#drivelock"/></svg>Sharif (D:)</li>
<li class="x"><svg class="e"><use href="#right"/></svg><svg class="i"><use href="#drive"/></svg>ROUND 60(SAIF)wdp (E:)</li>
<li class="x"><svg class="e"><use href="#right"/></svg><svg class="i"><use href="#drive"/></svg>New Volume (F:)</li>
<li class="x"><svg class="e"><use href="#right"/></svg><svg class="i"><use href="#gdrive"/></svg>Google Drive (G:)</li>
<li class="x"><svg class="e"><use href="#right"/></svg><svg class="i"><use href="#drive"/></svg>New Volume (H:)</li>
<li class="x"><svg class="e"><use href="#right"/></svg><svg class="i"><use href="#drive"/></svg>IsDB (I:)</li>
<li class="x"><svg class="e"><use href="#right"/></svg><svg class="i"><use href="#drive"/></svg>New Volume (J:)</li>
<li class="top x"><svg class="ed"><use href="#dn"/></svg><svg class="i"><use href="#drive"/></svg>IsDB (I:)</li>
<li class="x"><svg class="e"><use href="#right"/></svg><svg class="i"><use href="#folder"/></svg>etc</li>
<li class="x cur"><svg class="e"><use href="#right"/></svg><svg class="i"><use href="#folder"/></svg>IsDB</li>
<li class="x"><svg class="e"><use href="#right"/></svg><svg class="i"><use href="#folder"/></svg>New folder</li>
<li class="x"><svg class="e"><use href="#right"/></svg><svg class="i"><use href="#folder"/></svg>Sharif_Sharing_with_you</li>
</ul>
<div class="sb sb3"><svg><use href="#up"/></svg><i></i><svg><use href="#dn"/></svg></div>
<div class="list">
<div class="heads"><span>Name<svg><use href="#thin"/></svg></span><span>Date modified</span><span>Typ</span></div>
<div class="rows">
<div class="r"><svg class="i"><use href="#folder"/></svg><span>Andriod</span><span>5/20/2024 4:50 PM</span><span>File</span></div>
<div class="r"><svg class="i"><use href="#folder"/></svg><span>Angular</span><span>5/20/2024 5:29 PM</span><span>File</span></div>
<div class="r"><svg class="i"><use href="#folder"/></svg><span>Bootstrap</span><span>5/20/2024 5:44 PM</span><span>File</span></div>
<div class="r"><svg class="i"><use href="#folder"/></svg><span>CV</span><span>5/20/2024 5:44 PM</span><span>File</span></div>
<div class="r"><svg class="i"><use href="#folder"/></svg><span>exam</span><span>5/20/2024 5:44 PM</span><span>File</span></div>
<div class="r"><svg class="i"><use href="#folder"/></svg><span>Flutter</span><span>5/20/2024 5:54 PM</span><span>File</span></div>
<div class="r"><svg class="i"><use href="#folder"/></svg><span>HTML</span><span>5/20/2024 5:57 PM</span><span>File</span></div>
<div class="r"><svg class="i"><use href="#folder"/></svg><span>HW</span><span>5/20/2024 5:57 PM</span><span>File</span></div>
<div class="r"><svg class="i"><use href="#folder"/></svg><span>JAVA</span><span>5/20/2024 5:57 PM</span><span>File</span></div>
<div class="r"><svg class="i"><use href="#folder"/></svg><span>Java Script</span><span>5/20/2024 5:57 PM</span><span>File</span></div>
<div class="r"><svg class="i"><use href="#folder"/></svg><span>JEE_TCLK_A_56_01</span><span>5/20/2024 5:57 PM</span><span>File</span></div>
<div class="r"><svg class="i"><use href="#folder"/></svg><span>JOB Preparation</span><span>5/20/2024 5:58 PM</span><span>File</span></div>
<div class="r"><svg class="i"><use href="#folder"/></svg><span>orcle</span><span>5/20/2024 5:58 PM</span><span>File</span></div>
<div class="r"><svg class="i"><use href="#folder"/></svg><span>project</span><span>5/20/2024 5:58 PM</span><span>File</span></div>
<div class="r"><svg class="i"><use href="#folder"/></svg><span>result</span><span>5/20/2024 5:58 PM</span><span>File</span></div>
<div class="r"><svg class="i"><use href="#folder"/></svg><span>Spring</span><span>5/20/2024 6:07 PM</span><span>File</span></div>
<div class="r"><svg class="i"><use href="#folder"/></svg><span>SpringBoot</span><span>5/20/2024 6:07 PM</span><span>File</span></div>
<div class="r"><svg class="i"><use href="#rar"/></svg><span>CV.rar</span><span>3/4/2024 4:34 PM</span><span>Win</span></div>
<div class="r"><svg class="i"><use href="#txt"/></svg><span>ExamLink_HTML.txt</span><span>8/26/2023 3:40 PM</span><span>Text</span></div>
<div class="r"><svg class="i"><use href="#rar"/></svg><span>InterView.zip</span><span>4/24/2024 3:47 PM</span><span>Win</span></div>
<div class="r"><svg class="i"><use href="#rar"/></svg><span>JEE_TCLK_A_56_01.zip</span><span>5/16/2024 6:37 PM</span><span>Win</span></div>
<div class="r"><svg class="i"><use href="#rar"/></svg><span>JOB Preparation.zip</span><span>5/16/2024 6:50 PM</span><span>Win</span></div>
</div>
<div class="hsb"><svg class="lf"><use href="#up"/></svg><i></i><svg class="rt"><use href="#up"/></svg></div>
</div>
<div class="preview">Select a file to preview.</div>
</div>
<footer class="status"><span>22 items</span><em class="v on"><svg width="17" height="13"><use href="#details"/></svg></em><em class="v"><svg class="i14"><use href="#pics"/></svg></em></footer>
<div class="shade"></div>
</section>
</main>

<footer class="task">
<div class="start"><svg class="i"><use href="#winlogo"/></svg></div>
<div class="find"><svg class="fl" viewBox="0 0 18 18"><circle cx="11" cy="6.500" r="5.300" fill="none" stroke="#222" stroke-width="1.300"/><path d="M7.300 10.300L1 16.500" stroke="#222" stroke-width="1.400"/></svg><span>Type here to search</span>
<svg class="tea" viewBox="0 0 66 34"><path d="M9 8q-3-3 0-7M14 8q-3-3 0-7M19 8q-3-3 0-7" fill="none" stroke="#999"/><path d="M2 11h22v17q0 3-3 3H6q-4 0-4-3z" fill="#b5abc4"/><path d="M24 15q5 0 5 5t-5 5" fill="none" stroke="#b5abc4" stroke-width="2"/><path d="M5 17h7v10H5z" fill="#a5623f"/><path d="M0 31h28v2H0z" fill="#7b5148"/><path d="M35 33q8-10 14-30" fill="none" stroke="#6a9a2a" stroke-width="1.500"/><path d="M46 12q-2-8 6-12 3 8-6 12zM42 20Q32 16 33 7q10 3 9 13zM46 14q6-8 18-10-4 12-18 10zM40 24Q31 24 31 15q9 1 9 9zM42 22q6-5 15-3-6 8-15 3z" fill="#76ac2e"/></svg></div>
<div class="apps">
<i class="tv"><svg viewBox="0 0 24 24"><path d="M5 7h9v9H5zM5 3v2h9V3M5 20v-2h9v2M18 3v5M18 12v8" fill="none" stroke="#111" stroke-width="1.400"/><path d="M16.500 8.500h3v3h-3z" fill="#111"/></svg></i>
<i><svg viewBox="0 0 24 24"><path d="M12 1q4 3 6 4 5 4 5 9a11 10 0 0 1-22 0q0-6 4-9l1 3 3-1q0-4 3-6z" fill="url(#gff)"/><circle cx="12" cy="13" r="5" fill="#7a3ddb"/><path d="M6 9q4-1 6 1l4-1q-1 3-5 3-3 3 2 4-6 2-7-7z" fill="#ff9a1f"/></svg></i>
<i><svg viewBox="0 0 24 24"><circle cx="14" cy="9" r="7.500" fill="none" stroke="#ef7d10" stroke-width="4"/><circle cx="14" cy="9" r="9.500" fill="none" stroke="#333" stroke-width=".8"/><path d="M8.500 14.500L3 21" stroke="#c75d08" stroke-width="4.500" stroke-linecap="round"/><circle cx="14" cy="9" r="2" fill="#333"/></svg></i>
<i class="act"><svg viewBox="0 0 24 24"><path d="M1 3h9l1.500 2H1z" fill="#d79a10"/><path d="M1 5h22v15H1z" fill="#ffd35c"/><path d="M5 21v-7q0-2 2-2h10q2 0 2 2v7h-3.500v-4h-7v4z" fill="#2f8fe0"/></svg></i>
<i><svg viewBox="0 0 24 24"><path d="M2 1h15v19H2z" fill="#a8c4e6" stroke="#5980b0"/><path d="M2 7h15M2 13h15" stroke="#5980b0"/><circle cx="16" cy="16" r="7" fill="#1fae2c"/><path d="M14 12.500l6 3.500-6 3.500z" fill="#fff"/></svg></i>
<i><svg viewBox="0 0 24 24"><path d="M0 0h24v24H0z" fill="#0a90f0"/><circle cx="12" cy="12" r="10" fill="#fff"/><circle cx="8.500" cy="7.500" r="2.500" fill="none" stroke="#0a90f0" stroke-width="1.500"/><circle cx="15.500" cy="7.500" r="2.500" fill="none" stroke="#0a90f0" stroke-width="1.500"/><path d="M4 15l4-3v2h8v-2l4 3-4 3.500V17H8v1.500z" fill="#0a90f0"/></svg></i>
<i><svg viewBox="0 0 24 24"><path d="M0 0h24v24H0z" fill="#ef443b"/><path d="M4 12l5-5 5 5-5 5zM13 7l6 5-6 5 2-5z" fill="#fff"/></svg></i>
<i><svg viewBox="0 0 24 24"><path d="M2 2h17v20H2z" fill="#f7f7ee" stroke="#555"/><path d="M3 13h15v8H3z" fill="#79c142"/><path d="M2 3h17" stroke="#555" stroke-width="2" stroke-dasharray="1 1"/><path d="M5 8v4M8 10h5" stroke="#222"/><path d="M20 2l3 1-8 14-2 1z" fill="#e8a91c" stroke="#6b5b12" stroke-width=".5"/></svg></i>
<i><svg viewBox="0 0 24 24"><circle cx="12" cy="12" r="11.500" fill="#62358f"/><path d="M6 5l3 1.500h6L18 5q1 2 .5 4 2 6-4.500 7.500V22h-4v-3q-4 1-4-2 1 1 4 1v-1.500Q3.500 15 5.500 9 5 7 6 5z" fill="#e9e0f2"/></svg></i>
<i><svg viewBox="0 0 24 24"><path d="M1 12Q5 3 13 4l6-3-1 4q4 5 2 11l3 4-5-1-5 4q3-4 2-8-3-5-7-4-2 4-3 1z" fill="#2588ee"/></svg></i>
<i><svg viewBox="0 0 24 24"><circle cx="12" cy="12" r="11.700" fill="#ff6c37"/><path d="M5 18l9-11 4-1-1 4-7 6z" fill="#fff"/><path d="M8 16l7-7" stroke="#ff6c37"/></svg></i>
<i><svg viewBox="0 0 24 24"><path d="M1 1h22v22H1z" fill="url(#gij)"/><path d="M4 4h16v16H4z" fill="#0a0a14"/><path d="M6 6.500h4M8 6.500v5M6 11.500h4M12 6.500h4v4q0 1-2 1h-2M6 17h6" fill="none" stroke="#fff" stroke-width="1.200"/></svg></i>
<i><svg viewBox="0 0 24 24"><path d="M1 23q-1-10 5-14l10-8q8-1 7 6-2 8-8 12-6 4-14 4z" fill="#58728e"/><path d="M4 20L20 4" stroke="#dfe8f0" stroke-width="3"/><path d="M12 10q5 1 4 7" fill="none" stroke="#1b2b40" stroke-width="2"/><path d="M8 12q5 2 4 7" stroke="#49b4e8" fill="none" stroke-width="2"/></svg></i>
<i><svg viewBox="0 0 24 24"><path d="M1 1h22v22H1z" fill="#333437"/><path d="M12 12h11L12 23z" fill="#ffce0a"/><path d="M12 23L23 12v11z" fill="#222"/></svg></i>
<i><svg viewBox="0 0 24 24"><circle cx="12" cy="12" r="11.500" fill="#fff"/><path d="M12 4v3M12 8L7.500 18M12 8l4.500 10M7.500 13.500q4.500 3 9 0" fill="none" stroke="#4280e8" stroke-width="2"/><circle cx="12" cy="9" r="2" fill="#2b5fb8"/></svg></i>
<i><svg viewBox="0 0 24 24"><rect x="1" y="2" width="22" height="21" rx="4" fill="#f4f4f4" stroke="#999"/><path d="M1 13Q3 4 11 0v15z" fill="#149b48"/><path d="M10 2q10 5 12 15l-7 4z" fill="#cb1f22"/></svg></i>
<i><svg viewBox="0 0 24 24"><path d="M1 4h22v16H1z" fill="#fff" stroke="#999"/><path d="M3 8h3M3 11h3M3 14h3" stroke="#999"/><path d="M8 7h9v10H8z" fill="#0c74d6"/><path d="M19 8h3M19 11h3M19 14h3" stroke="#bbb"/></svg></i>
<i><svg viewBox="0 0 24 24"><path d="M17 0l7 3v18l-7 3-10-9-4 3-2.500-1.500v-9L3 6l4 3zM17 7l-6 5 6 5zM2.500 9.500v5L5 12z" fill="#1a8ad4" fill-rule="evenodd"/></svg></i>
<i><svg viewBox="0 0 24 24"><circle cx="12" cy="12" r="11.500" fill="#fbc116"/><path d="M12 12L2 6.200a11.500 11.500 0 0 1 20 0z" fill="#e33b2e"/><path d="M12 12L2 6.200A11.500 11.500 0 0 0 11.500 23.500L17 15z" fill="#229a48"/><circle cx="12" cy="12" r="5.600" fill="#fff"/><circle cx="12" cy="12" r="4.400" fill="#3b78e7"/></svg></i>
<i class="run"><svg viewBox="0 0 24 24"><path d="M6 1h18v22H6z" fill="#2b7cd3"/><path d="M6 1h18v6H6z" fill="#41a5ee"/><path d="M6 17h18v6H6z" fill="#103f91"/><path d="M0 6h13v13H0z" fill="#185abd"/><path d="M3 9l1.700 7L6.500 10l1.800 6L10 9" fill="none" stroke="#fff" stroke-width="1.400"/></svg></i>
<i class="run"><svg viewBox="0 0 24 24"><circle cx="12" cy="12" r="11.500" fill="#fbc116"/><path d="M12 12L2 6.200a11.500 11.500 0 0 1 20 0z" fill="#e33b2e"/><path d="M12 12L2 6.200A11.500 11.500 0 0 0 11.500 23.500L17 15z" fill="#229a48"/><circle cx="12" cy="12" r="5.600" fill="#fff"/><circle cx="12" cy="12" r="4.400" fill="#3b78e7"/><circle cx="18" cy="18" r="6" fill="#d9dde2"/><circle cx="18" cy="16" r="2.200" fill="#5b4c44"/><path d="M14 22q0-4 4-4t4 4z" fill="#34373c"/></svg></i>
</div>
<div class="tray">
<svg class="wx" viewBox="0 0 24 24"><circle cx="11" cy="11" r="8" fill="#f6a623"/><path d="M1 10h12M0 14h20M2 18h16M6 22h9" stroke="#f3b43c" stroke-width="2.400"/><circle cx="18" cy="6" r="6" fill="#c92a20"/><path d="M16.500 4.500L18.200 3v6" fill="none" stroke="#fff" stroke-width="1.200"/></svg>
<span class="wt">98°F&nbsp; Haze</span>
<svg class="s1" viewBox="0 0 12 8"><path d="M1 6.500l5-5 5 5" fill="none" stroke="#111" stroke-width="1.400"/></svg>
<svg class="s2" viewBox="0 0 16 16"><circle cx="8" cy="8" r="6.500" fill="none" stroke="#111" stroke-width="1.500"/><circle cx="8" cy="8" r="3.200" fill="#111"/></svg>
<svg class="s2" viewBox="0 0 16 16"><rect x="3" y="4" width="7" height="8" rx="1.500" fill="none" stroke="#111"/><path d="M10 7l3-1.500v5L10 9M4 1.500h5M4 14.500h5" fill="none" stroke="#111"/></svg>
<svg class="s2" viewBox="0 0 16 16"><path d="M4 3.500h11.500v8H4zM7 14.500h6M10 11.500v3M.5 1.500h4v4h-4zM2.500 5.500v9" fill="none" stroke="#111"/></svg>
<svg class="s2" viewBox="0 0 16 16"><path d="M1.500 5.500h2l3-3.500v11l-3-3h-2z" fill="none" stroke="#111"/><circle cx="11.500" cy="11.500" r="4.300" fill="#d8262c"/><path d="M9.800 9.800l3.400 3.400M13.200 9.800l-3.400 3.400" stroke="#fff"/></svg>
<div class="clock">6:20 PM<br>5/21/2024</div>
<div class="note"><svg viewBox="0 0 24 24"><path d="M2 2h17v13h-3v5l-5-5H2z" fill="#111"/><path d="M4.500 5.500h12M4.500 8.500h12M4.500 11.500h8" stroke="#fff"/></svg><span>2</span></div>
</div>
</footer>
</div>
</body>
</html>
```
FILE: styles.css
```css
* { box-sizing: border-box; }
body { margin: 0; background: #fff; color: #000; font: 11.5px/15px "Open Sans", "Noto Sans", sans-serif; letter-spacing: -0.25px; overflow: hidden; }
.defs { position: absolute; width: 0; height: 0; }
svg { display: block; flex: none; }
ul, h2 { margin: 0; padding: 0; }
.i { width: 16px; height: 16px; }
.i14 { width: 14px; height: 14px; }
.tri { width: 6px; height: 4px; display: inline-block; vertical-align: 2px; }
.screen { width: 1920px; height: 1080px; display: flex; flex-direction: column; }
.desk { display: flex; height: 1040px; }
.win { width: 960px; height: 1040px; display: flex; flex-direction: column; overflow: hidden; background: #fff; white-space: nowrap; }
.win1 { padding-left: 1px; }
.win2 { position: relative; }
.shade { position: absolute; left: 0; top: 0; width: 12px; height: 100%; background: linear-gradient(90deg, rgba(0,0,0,.28), rgba(0,0,0,.08) 50%, transparent); }

.title { height: 31px; display: flex; align-items: center; padding: 0 18px 0 8px; }
.win2 .title { margin-top: -8px; padding-right: 17px; }
.bar { width: 1px; height: 12px; background: #999; }
.b1 { margin: 0 11px 0 7px; }
.chk { width: 12px; height: 16px; }
.q { margin: 0 7px 0 8px; }
.qat { width: 7px; color: #111; margin-right: 8px; }
.qat i { display: block; height: 1px; background: #111; margin: 2px 0 2px; }
.qat .tri { display: block; }
.cap { margin-left: 7px; flex: 1; font-size: 12px; letter-spacing: -0.38px; }
.wb { width: 102px; height: 12px; }
.win2 .cap, .win2 .wb { color: #8c8c8c; }

.tabs { height: 24px; display: flex; align-items: center; border-bottom: 1px solid #dadbdc; color: #222; font-size: 12px; letter-spacing: -.35px; padding-right: 4px; }
.win2 .tabs { padding-right: 3px; }
.tabs > span { width: 58px; text-align: center; line-height: 23px; height: 24px; }
.tabs .file { width: 56px; background: #997b20; color: #000; height: 23px; align-self: flex-start; line-height: 23px; }
.tabs .home { background: #f5f6f7; border: 1px solid #dadbdc; border-bottom: 0; line-height: 22px; }
.win2 .tabs, .win2 .tabs .home { border-color: transparent; background: none; }
.win2 .tabs .file { background: #997b20; }
.col { width: 10px; height: 6px; margin-left: auto; color: #8c8c8c; }
.tabs > .help { width: 16px; height: 16px; line-height: 15px; margin-left: 9px; border-radius: 8px; background: #0a66c8; color: #fff; font-weight: 700; border: 1px solid #1b4f8a; }

.ribbon { height: 92px; display: flex; background: #f5f6f7; border-bottom: 1px solid #dadbdc; color: #222; padding-top: 4px; }
.win2 .ribbon { background: #fff; border-color: transparent; }
.grp { display: flex; flex-direction: column; border-right: 1px solid #e1e2e3; height: 85px; }
.grp > b { font-weight: 400; text-align: center; color: #444; line-height: 16px; margin-top: 2px; }
.btns { display: flex; height: 70px; }
.g1 { width: 263px; } .g1 .btns { padding-left: 6px; }
.g2 { width: 191px; } .g2 .btns { padding-left: 3px; }
.g3 { width: 145px; } .g3 .btns { padding-left: 3px; }
.g4 { width: 133px; } .g4 .btns { padding-left: 5px; }
.g5 { width: 115px; } .g5 .btns { padding-left: 4px; }
.big { text-align: center; line-height: 13px; height: 66px; padding-top: 4px; font-size: 11.5px; }
.big > svg:first-child { margin: 0 auto 6px; height: 30px; }
.big > .n1:first-child { transform: translateX(1px); }
.big > .n3:first-child { transform: translateX(3px); }
.big .tri { vertical-align: 3px; }
.big > .pinb { width: 20px; height: 30px; }
.b66 { width: 66px; } .b42 { width: 42px; } .b46 { width: 46px; } .b54 { width: 54px; }
.g1 .b42 + .b42 { width: 43px; }
.del { margin-left: 8px; }
.small span { display: flex; align-items: center; height: 22px; padding: 0 4px 0 3px; width: max-content; gap: 3px; }
.g3 .small, .g4 .small { margin-left: 1px; }
.small .tri { margin-left: 2px; }
.sh { background: #f5f6f7; }
.half { background: linear-gradient(#f5f6f7 38px, transparent 38px); }
.off { color: #777; }
.win2 .off { --f1: #dfe7f4; --f2: #c5d2e6; --p: #edf2fa; --ps: #9fb0cb; --b: #8fa3c6; }
.half > svg:first-child { --b: #7d92b9; }
.win2 .off .tri { color: #aaa; }

.addr { height: 35px; display: flex; align-items: center; padding: 0 13px 0 12px; color: #666; }
.win2 .addr { padding-right: 12px; }
.ar { width: 14px; height: 12px; }
.fw { margin-left: 16px; transform: scaleX(-1); color: #ccc; }
.rec { width: 8px; height: 5px; margin-left: 12px; }
.upw { margin-left: 10px; transform: rotate(90deg); }
.crumbs { flex: 1; margin: 0 12px 0 6px; height: 22px; border: 1px solid #d9d9d9; display: flex; align-items: center; color: #111; padding-left: 3px; font-size: 12px; letter-spacing: -.4px; }
.ch { width: 6px; height: 8px; margin: 0 8.500px; color: #777; }
.crumbs .i + .ch { margin-left: 6px; margin-right: 9px; }
.dd { width: 10px; height: 6px; margin-left: auto; color: #666; }
.rf { width: 17px; height: 20px; margin-left: 3px; border-left: 1px solid #d9d9d9; display: grid; place-items: center; color: #666; }
.rf svg { width: 12px; height: 12px; }
.search { width: 293px; height: 22px; border: 1px solid #d9d9d9; display: flex; align-items: center; justify-content: space-between; padding: 0 8px; font-size: 12px; letter-spacing: -.42px; }
.search svg { width: 12px; height: 12px; }

.body { flex: 1; min-height: 0; display: flex; }
.tree { width: 222px; list-style: none; overflow: hidden; }
.tree li { display: flex; align-items: center; height: 24px; padding: 0 0 1px 32px; width: 221px; gap: 5px; font-size: 12px; letter-spacing: -.33px; }
.tree li.top { margin-top: 8px; padding-left: 24px; }
.tree .cur { background: #d9d9d9; }
.tree .hov { background: #e5f3ff; }
.tree li.x { padding-left: 15px; }
.tree li.top.x { padding-left: 7px; }
.e { width: 7px; height: 10px; margin-right: 5px; color: #a0a0a0; }
.top .e { margin-right: 5px; margin-left: 0; }
.ed { width: 9px; height: 6px; margin: 0 4px 0 -1px; color: #444; }
.p { width: 11px; height: 11px; margin-left: auto; margin-right: 3px; }
.sb { width: 16px; background: #f0f0f0; display: flex; flex-direction: column; align-items: center; color: #555; }
.sb svg, .hsb svg { width: 8px; height: 5px; }
.sb svg:first-child { margin-top: 7px; }
.sb svg:last-child { margin-top: auto; margin-bottom: 6px; }
.sb i { width: 15px; background: #cdcdcd; }
.sb1 i { margin-top: 223px; height: 535px; }
.sb2 { width: 15px; }
.sb2 i { margin-top: 11px; height: 793px; }
.sb3 i { margin-top: 184px; height: 546px; }
.files { width: 425px; margin-left: 2px; border-left: 1px solid #f0f0f0; padding-left: 7px; }
.files h2 { height: 31px; display: flex; align-items: center; font-weight: 400; font-size: 15px; letter-spacing: -.33px; color: #1e3287; padding-right: 8px; }
.files h2 svg { width: 12px; height: 8px; color: #666; margin-right: 3px; }
.files h2::after { content: ""; flex: 1; height: 1px; background: #e2e2e2; margin-left: 7px; }
.tiles { display: flex; flex-wrap: wrap; gap: 1px; padding-left: 8px; align-items: flex-start; }
.t { width: 80px; min-height: 92px; text-align: center; padding: 2px 0 3px; line-height: 15px; font-size: 12px; letter-spacing: -.31px; }
.t > svg { width: 72px; height: 72px; margin: 0 auto; }
.s { background: #cce8ff; }
.k > svg { background: #000; }
.foc { box-shadow: inset 0 0 0 1px #99d1ff; }
.fr > svg { border: 1px solid #e5e5e5; }
.preview { flex: 1; display: grid; place-items: center; color: #666; font-size: 12px; letter-spacing: -.28px; border-left: 1px solid #f3f3f3; }
.win1 .preview { border: 0; padding: 0 0 1px 3px; }
.status { height: 24px; display: flex; align-items: center; padding-left: 14px; color: #1e395b; font-size: 12px; letter-spacing: -.33px; padding-right: 5px; }
.win2 .status { padding-right: 4px; }
.status span { padding-right: 10px; border-right: 1px solid #eee; margin-right: 10px; line-height: 14px; }
.status span + em { margin-left: auto; }
.v { height: 24px; width: 22px; display: grid; place-items: center; }
.win2 .v.on { background: #cbe8f6; border: 1px solid #26a0da; }

.list { width: 444px; margin-left: 2px; border-left: 1px solid #f0f0f0; display: flex; flex-direction: column; overflow: hidden; }
.heads { display: flex; height: 25px; color: #4c607a; font-size: 12px; letter-spacing: -.22px; line-height: 26px; }
.heads span { padding-left: 6px; border-right: 1px solid #e5e5e5; width: 144px; position: relative; flex: none; }
.heads span:first-child { width: 273px; padding-left: 18px; }
.heads span:last-child { width: 26px; border: 0; overflow: hidden; }
.heads svg { position: absolute; left: 138px; top: 0; width: 9px; height: 6px; transform: scaleY(-1); color: #555; }
.rows { padding-top: 6px; flex: 1; }
.r { display: flex; height: 21px; align-items: center; padding-left: 19px; width: 441px; overflow: hidden; font-size: 12px; letter-spacing: -.35px; }
.r span:nth-child(2) { width: 244px; padding-left: 4px; flex: none; }
.r span:nth-child(3), .r span:nth-child(4) { width: 144px; color: #6d6d6d; flex: none; letter-spacing: -.42px; }
.hsb { height: 16px; background: #f0f0f0; display: flex; align-items: center; width: 442px; color: #555; }
.hsb i { width: 287px; height: 15px; background: #cdcdcd; margin-left: 6px; }
.hsb .lf { transform: rotate(-90deg); margin-left: 4px; }
.hsb .rt { transform: rotate(90deg); margin-left: auto; margin-right: 4px; }

.task { height: 40px; display: flex; background: linear-gradient(90deg, #e6e6e8 0, #e6e6e8 44%, #dde3d8 50%, #dfe4dc 56%, #e4e5e6 64%, #e8e6e5 100%); }
.start { width: 48px; display: grid; place-items: center; }
.find { width: 288px; background: #fff; border: 1px solid #b5b5b5; display: flex; align-items: center; padding-left: 10px; color: #333; font-size: 15px; letter-spacing: -.45px; }
.fl { width: 18px; height: 18px; margin-right: 11px; }
.find span { flex: 1; }
.tea { width: 66px; height: 34px; margin-right: 2px; }
.apps { display: flex; }
.apps i { width: 49px; display: grid; place-items: center; }
.apps .tv { width: 50px; }
.apps svg { width: 24px; height: 24px; }
.apps .tv svg { width: 20px; height: 20px; }
.apps .act { background: #f7f7f8; border-right: 1px solid #ccc; box-shadow: inset 0 -2px #cba52c; }
.run { box-shadow: inset 0 -2px #cba52c; }
.apps .run { width: 41px; margin: 0 4px; }
.tray { margin-left: auto; display: flex; align-items: center; width: 354px; color: #222; font-size: 14px; letter-spacing: -.4px; }
.wx { width: 24px; height: 24px; margin-right: 8px; }
.wt { width: 91px; white-space: nowrap; }
.s1 { width: 12px; height: 8px; margin-right: 11px; }
.s2 { width: 16px; height: 16px; margin-right: 8px; }
.clock { font-size: 12px; line-height: 18px; text-align: center; width: 72px; letter-spacing: -.4px; margin-left: -9px; }
.note { position: relative; margin-left: 8px; }
.note svg { width: 22px; height: 22px; }
.note span { position: absolute; left: 10px; top: 8px; width: 17px; height: 17px; border-radius: 9px; background: #d4d4d4; border: 1px solid #555; font-size: 11px; line-height: 15px; text-align: center; }
```
